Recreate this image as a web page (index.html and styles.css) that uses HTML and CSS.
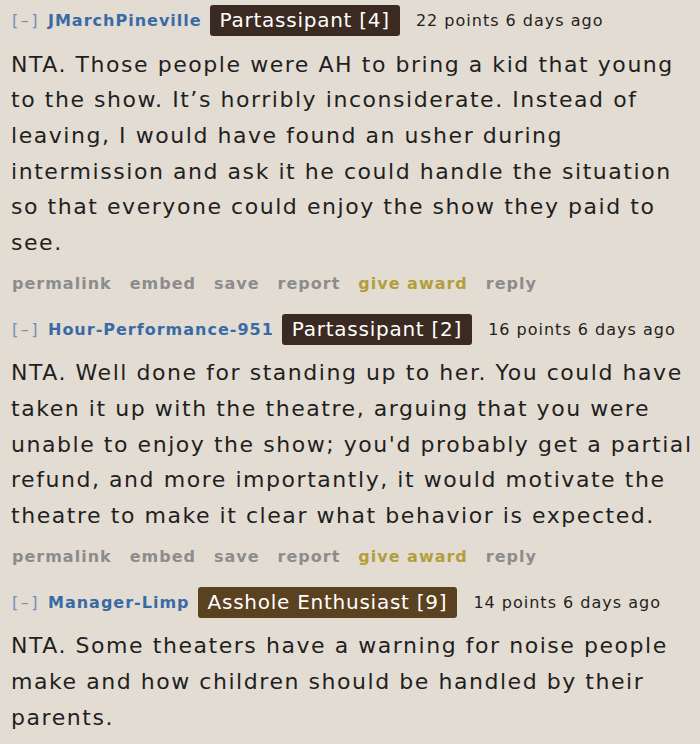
FILE: index.html
```html
<!DOCTYPE html>
<html>
<head>
<meta charset="utf-8">
<link rel="stylesheet" href="styles.css">
</head>
<body>
<div class="thread">
  <div class="comment">
    <div class="tagline">
      <span class="expand">[–]</span>
      <span class="author">JMarchPineville</span>
      <span class="flair">Partassipant [4]</span>
      <span class="meta">22 points 6 days ago</span>
    </div>
    <p class="body">NTA. Those people were AH to bring a kid that young to the show. It’s horribly inconsiderate. Instead of leaving, I would have found an usher during intermission and ask it he could handle the situation so that everyone could enjoy the show they paid to see.</p>
    <div class="buttons">
      <span>permalink</span><span>embed</span><span>save</span><span>report</span><span class="award">give award</span><span>reply</span>
    </div>
  </div>
  <div class="comment">
    <div class="tagline">
      <span class="expand">[–]</span>
      <span class="author">Hour-Performance-951</span>
      <span class="flair">Partassipant [2]</span>
      <span class="meta">16 points 6 days ago</span>
    </div>
    <p class="body">NTA. Well done for standing up to her. You could have taken it up with the theatre, arguing that you were unable to enjoy the show; you'd probably get a partial refund, and more importantly, it would motivate the theatre to make it clear what behavior is expected.</p>
    <div class="buttons">
      <span>permalink</span><span>embed</span><span>save</span><span>report</span><span class="award">give award</span><span>reply</span>
    </div>
  </div>
  <div class="comment">
    <div class="tagline">
      <span class="expand">[–]</span>
      <span class="author">Manager-Limp</span>
      <span class="flair flair-brown">Asshole Enthusiast [9]</span>
      <span class="meta">14 points 6 days ago</span>
    </div>
    <p class="body">NTA. Some theaters have a warning for noise people make and how children should be handled by their parents.</p>
  </div>
</div>
</body>
</html>
```
FILE: styles.css
```css
html, body {
  margin: 0;
  padding: 0;
  background: #e3dcd3;
}
body {
  font-family: "DejaVu Sans", Verdana, sans-serif;
  color: #1f1f1f;
  letter-spacing: 1px;
}
.thread {
  padding: 5px 0 0 11px;
  width: 687px;
}
.comment {
  display: flex;
  flex-direction: column;
}
.tagline {
  display: flex;
  align-items: center;
  height: 31px;
  font-size: 16px;
}
.expand {
  color: #6d8fc0;
  letter-spacing: 2.5px;
  margin-left: 1px;
  margin-right: 8px;
}
.author {
  color: #3a6aa6;
  font-weight: bold;
  margin-right: 8px;
}
.flair {
  background: #3b2a21;
  color: #fff;
  font-size: 20px;
  letter-spacing: 0.75px;
  line-height: 31px;
  padding: 0 10px;
  border-radius: 3px;
  margin-right: 16px;
}
.flair-brown {
  background: #5a4120;
}
.meta {
  color: #1f1f1f;
}
.body {
  font-size: 22px;
  letter-spacing: 1.55px;
  line-height: 35.7px;
  margin: 10.5px 0 0 0;
}
.buttons {
  display: flex;
  gap: 18px;
  font-size: 16px;
  font-weight: bold;
  color: #8c8c8c;
  margin: 10.5px 0 18.5px 1px;
  height: 24px;
  align-items: center;
}
.buttons .award {
  color: #b29e3c;
}
```
